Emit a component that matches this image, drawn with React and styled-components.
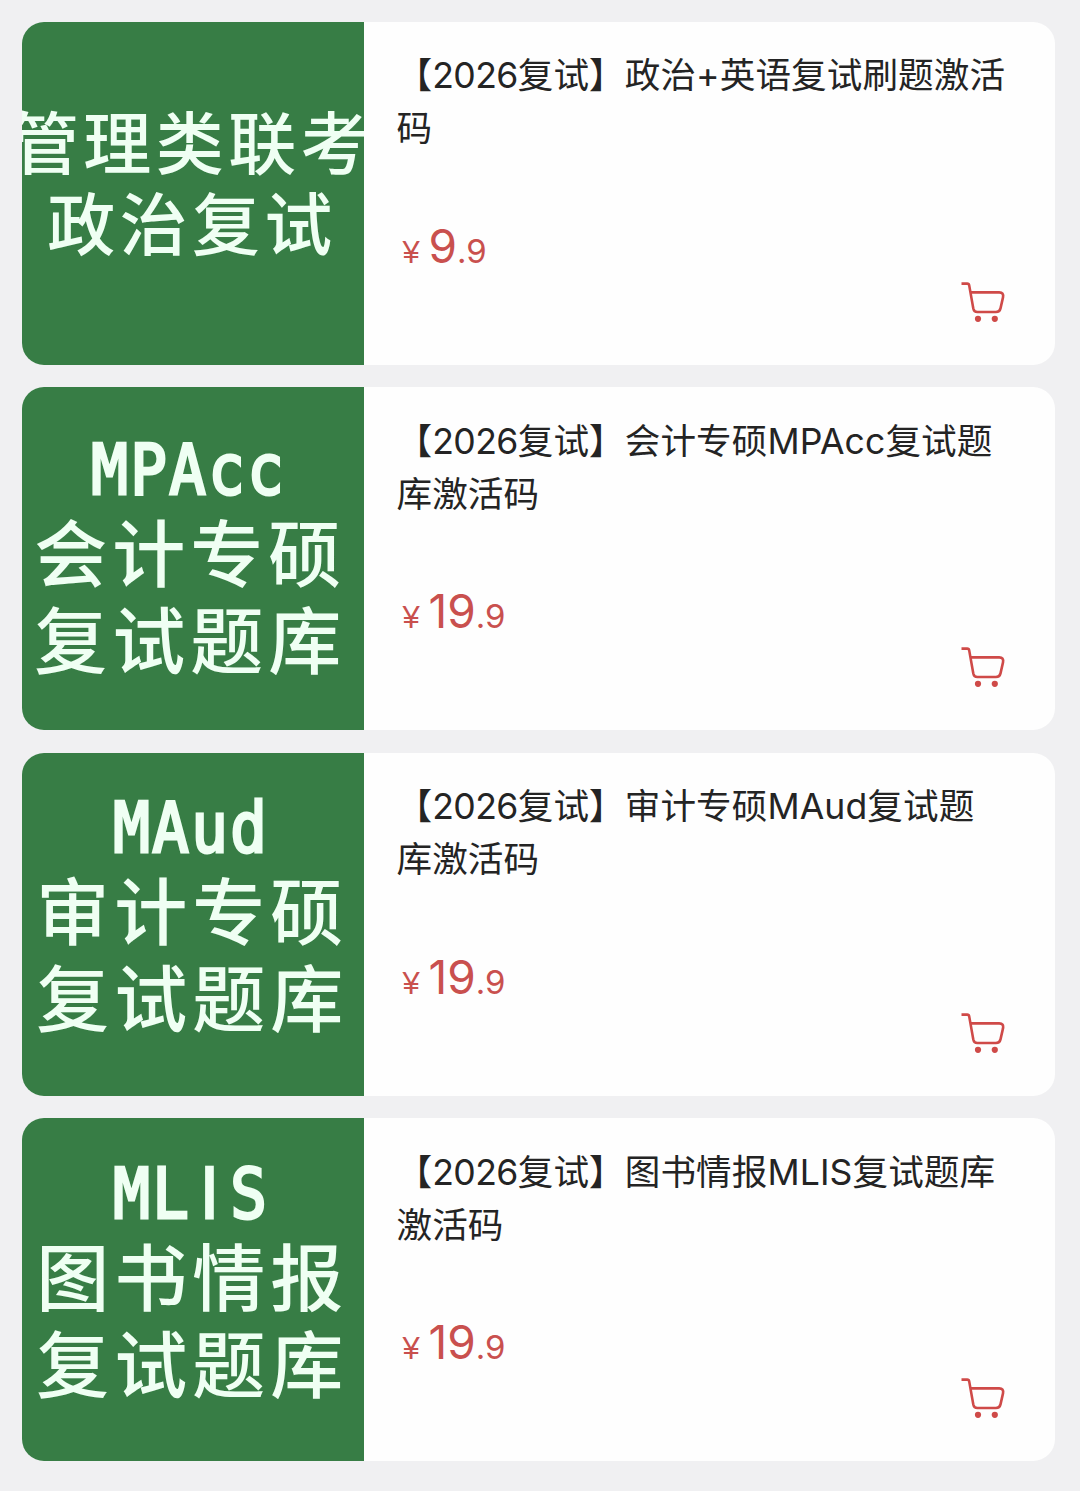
import React from 'react';
import styled, { createGlobalStyle } from 'styled-components';

/* Data ---------------------------*/
const products = [
    {
        id: 'politics',
        cover: { size: 68, spacing: 4.4, leading: 81, top: 77, shift: -3, lines: ['管理类联考', '政治复试'] },
        year: '2026',
        title: ['复试】政治+英语复试刷题激活', '码'],
        price: ['9', '.9'],
    },
    {
        id: 'mpacc',
        cover: { size: 73, spacing: 5, leading: 87, top: 31.5, shift: -5, latin: 'MPAcc', lines: ['会计专硕', '复试题库'] },
        year: '2026',
        title: ['复试】会计专硕MPAcc复试题', '库激活码'],
        price: ['19', '.9'],
    },
    {
        id: 'maud',
        cover: { size: 73, spacing: 5, leading: 87, top: 24.5, shift: -3, latin: 'MAud', lines: ['审计专硕', '复试题库'] },
        year: '2026',
        title: ['复试】审计专硕MAud复试题', '库激活码'],
        price: ['19', '.9'],
    },
    {
        id: 'mlis',
        cover: { size: 73, spacing: 5, leading: 87, top: 24.5, shift: -3, latin: 'MLIS', lines: ['图书情报', '复试题库'] },
        year: '2026',
        title: ['复试】图书情报MLIS复试题库', '激活码'],
        price: ['19', '.9'],
    },
];

/* Components ---------------------------*/
const CartIcon = () => (
    <svg width="46" height="44" viewBox="0 0 46 44" fill="none">
        <path
            d="M0.5 2.6H6.2C7.4 2.6 8 3.2 8.2 4.4L12.3 27.4C12.8 29.8 14 31 16.4 31H35C37.6 31 38.9 30 39.5 27.4L42 16.4C42.6 13 41.4 11.4 38.2 11.4H9.6"
            stroke="currentColor"
            strokeWidth="2.6"
        />
        <circle cx="17" cy="37.8" r="3.1" fill="currentColor" />
        <circle cx="33.8" cy="37.8" r="3.1" fill="currentColor" />
    </svg>
);

const Cover = ({ cover }) => (
    <CoverStyled $top={cover.top} $shift={cover.shift}>
        {cover.latin && (
            <LatinLine>
                {cover.latin.split('').map((letter, i) => (
                    <Letter key={i} $plain={letter === 'I'}>{letter}</Letter>
                ))}
            </LatinLine>
        )}
        {cover.lines.map((line) => (
            <CoverLine key={line} $size={cover.size} $spacing={cover.spacing} $leading={cover.leading}>
                {line}
            </CoverLine>
        ))}
    </CoverStyled>
);

const Product = ({ cover, year, title, price }) => (
    <Card>
        <Cover cover={cover} />
        <Details>
            <Title>
                <TitleLine>【<Year>{year}</Year>{title[0]}</TitleLine>
                <TitleLine>{title[1]}</TitleLine>
            </Title>
            <Price>
                <Currency>¥</Currency>
                <Whole>{price[0]}</Whole>
                <Fraction>{price[1]}</Fraction>
            </Price>
            <CartButton aria-label="加入购物车">
                <CartIcon />
            </CartButton>
        </Details>
    </Card>
);

const App = () => {

    return (
        <>
            <GlobalStyle />
            <List>
                {products.map((product) => <Product key={product.id} {...product} />)}
            </List>
        </>
    );
}

export default App;

const GlobalStyle = createGlobalStyle`
    * {
        box-sizing: border-box;
    }

    body {
        margin: 0;
        background: #f0f0f2;
        font-family: Inter, 'Noto Sans CJK SC', sans-serif;
    }
`;

const List = styled.main`
    display: flex;
    flex-direction: column;
    gap: 22.5px;
    width: 1080px;
    height: 1491px;
    padding: 21.5px 25px 0 22px;
`;

const Card = styled.article`
    display: flex;
    height: 343px;
    flex: none;
    overflow: hidden;
    border-radius: 22px;
    background: #fefefe;
`;

const CoverStyled = styled.div`
    display: flex;
    flex-direction: column;
    align-items: center;
    flex: none;
    width: 341.5px;
    padding-top: ${({ $top }) => $top}px;
    padding-right: ${({ $shift }) => -2 * $shift}px;
    overflow: hidden;
    background: #377d45;
    color: #effff3;
`;

const CoverLine = styled.div`
    flex: none;
    font-family: 'Noto Sans CJK SC', sans-serif;
    font-size: ${({ $size }) => $size}px;
    font-weight: 500;
    letter-spacing: ${({ $spacing }) => $spacing}px;
    margin-right: ${({ $spacing }) => -$spacing}px;
    line-height: ${({ $leading }) => $leading}px;
    white-space: nowrap;
`;

const LatinLine = styled.div`
    display: flex;
    height: 87px;
    flex: none;
    padding-top: 8px;
`;

const Letter = styled.span`
    display: flex;
    justify-content: center;
    width: 39px;
    font-family: ${({ $plain }) => ($plain ? "'DejaVu Sans'" : "'DejaVu Sans Mono'")}, monospace;
    font-size: 69px;
    line-height: 87px;
    transform: scaleX(0.88);
    -webkit-text-stroke: 3px currentColor;
`;

const Details = styled.div`
    display: flex;
    flex-direction: column;
    flex: 1;
    padding: 27.5px 48px 0 33px;
`;

const Title = styled.h2`
    height: 106px;
    margin: 0;
    color: #242424;
    font-size: 35.6px;
    font-weight: 400;
    letter-spacing: 0.1px;
    line-height: 53px;
`;

const TitleLine = styled.span`
    display: block;
    white-space: nowrap;
`;

const Year = styled.span`
    letter-spacing: -0.6px;
`;

const Price = styled.div`
    display: flex;
    align-items: baseline;
    height: 56px;
    margin-top: 62.5px;
    padding-left: 6px;
    color: #c9504e;
    line-height: 56px;
`;

const Currency = styled.span`
    width: 26px;
    font-family: 'Liberation Sans', sans-serif;
    font-size: 31px;
`;

const Whole = styled.span`
    font-size: 46px;
`;

const Fraction = styled.span`
    font-size: 33px;
`;

const CartButton = styled.button`
    display: flex;
    align-self: flex-end;
    margin-top: 7px;
    padding: 0;
    border: 0;
    background: none;
    color: #cf4a48;
`;
